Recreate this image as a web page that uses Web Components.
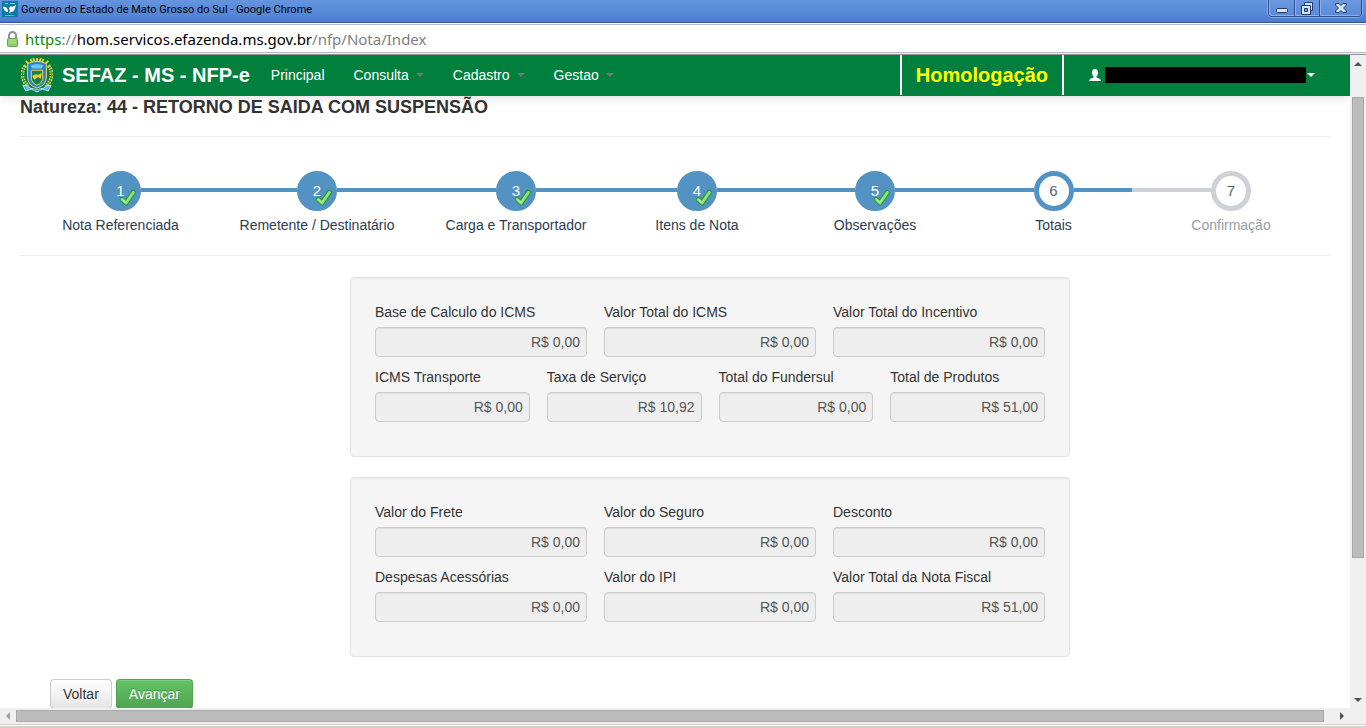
<!DOCTYPE html>
<html lang="pt-BR">
<head>
<meta charset="utf-8">
<title>Governo do Estado de Mato Grosso do Sul</title>
<style>
html, body { margin: 0; height: 100%; }
body { font: 14px/20px "Liberation Sans", Arial, sans-serif; color: #333; background: #fff; overflow: hidden; }
</style>
</head>
<body>
<browser-window>
  <title-bar slot="title">Governo do Estado de Mato Grosso do Sul - Google Chrome</title-bar>
  <address-bar slot="address"></address-bar>
  <site-header slot="page"></site-header>
  <nota-page slot="page">
    <span slot="heading">Natureza: 44 - RETORNO DE SAIDA COM SUSPENSÃO</span>
    <step-list slot="steps"></step-list>
    <field-panel slot="panels">
      <field-row>
        <money-field label="Base de Calculo do ICMS" value="R$ 0,00"></money-field>
        <money-field label="Valor Total do ICMS" value="R$ 0,00"></money-field>
        <money-field label="Valor Total do Incentivo" value="R$ 0,00"></money-field>
      </field-row>
      <field-row>
        <money-field label="ICMS Transporte" value="R$ 0,00"></money-field>
        <money-field label="Taxa de Serviço" value="R$ 10,92"></money-field>
        <money-field label="Total do Fundersul" value="R$ 0,00"></money-field>
        <money-field label="Total de Produtos" value="R$ 51,00"></money-field>
      </field-row>
    </field-panel>
    <field-panel slot="panels">
      <field-row>
        <money-field label="Valor do Frete" value="R$ 0,00"></money-field>
        <money-field label="Valor do Seguro" value="R$ 0,00"></money-field>
        <money-field label="Desconto" value="R$ 0,00"></money-field>
      </field-row>
      <field-row>
        <money-field label="Despesas Acessórias" value="R$ 0,00"></money-field>
        <money-field label="Valor do IPI" value="R$ 0,00"></money-field>
        <money-field label="Valor Total da Nota Fiscal" value="R$ 51,00"></money-field>
      </field-row>
    </field-panel>
    <action-button slot="actions">Voltar</action-button>
    <action-button slot="actions" variant="success">Avançar</action-button>
  </nota-page>
  <scroll-bar slot="vscroll" direction="vertical"></scroll-bar>
  <scroll-bar slot="hscroll" direction="horizontal"></scroll-bar>
</browser-window>

<script>
const component = (name, render, ready) => customElements.define(name, class extends HTMLElement {
  constructor() { super(); this.attachShadow({ mode: 'open' }); }
  connectedCallback() {
    this.shadowRoot.innerHTML = '<style>:host,*{box-sizing:border-box}</style>' + render(this);
    if (ready) ready(this);
  }
});

component('browser-window', () => `
<style>
:host { display: flex; flex-direction: column; height: 100vh; }
.view { flex: 1; min-height: 0; display: flex; }
.page { flex: 1; min-width: 0; overflow: hidden; }
.edge { height: 4px; background: #d4d0c8; box-shadow: inset 0 1px #d4d0c8, inset 0 2px #fff; }
</style>
<slot name="title"></slot>
<slot name="address"></slot>
<div class="view"><div class="page"><slot name="page"></slot></div><slot name="vscroll"></slot></div>
<slot name="hscroll"></slot>
<div class="edge"></div>`);

component('title-bar', () => `
<style>
:host { display: flex; height: 23px; background: linear-gradient(#6495de, #5585d6 70%, #4b79cf); border-bottom: 1px solid #2f5597; color: #000; font: 11px/20px Roboto, Tahoma, sans-serif; }
.icon { width: 16px; height: 16px; margin: 1px 3px 0 2px; }
.text { flex: 1; }
.controls { display: flex; height: 17px; margin-right: 4px; border: 1px solid #2d4f8e; border-top: 0; border-radius: 0 0 4px 4px; box-shadow: 0 0 0 1px #83a9e6; }
button { border: 0; border-left: 1px solid #2d4f8e; padding: 0; margin: 0; width: 25px; background: linear-gradient(#6b98e0, #5a89d8); box-shadow: inset 1px -1px #8bb0ea; display: flex; justify-content: center; }
button:first-child { border-left: 0; border-radius: 0 0 0 3px; }
button:last-child { width: 42px; border-radius: 0 0 3px 0; }
</style>
<svg class="icon" viewBox="0 0 16 16"><rect width="16" height="16" fill="#087ca9"/><path d="M3 2.500h3M8 2.500h5" stroke="#75c6df"/><path d="M1 6c3-1 5 1 5 5C3 11 2 9 1 6zM7 8c0-2 2-4 3-2l4-2-2 6-5 2 1-3z" fill="#fff"/><path d="M3 14.500h9" stroke="#57b5d4"/></svg>
<span class="text"><slot></slot></span>
<div class="controls">
<button aria-label="Minimizar"><svg width="14" height="16"><rect x="1.500" y="8.500" width="11" height="4" rx="1" fill="#d7e4fa" stroke="#1f3c72"/></svg></button>
<button aria-label="Restaurar"><svg width="14" height="16" fill="#d7e4fa" stroke="#1f3c72"><path d="M4.500 2.500h8v8h-8z"/><path d="M1.500 5.500h9v9h-9z"/><path d="M4.500 8.500h3v3h-3z" fill="#6f99dc"/></svg></button>
<button aria-label="Fechar"><svg width="14" height="16"><path d="M1.500 3.500h3.500l2 2 2-2h3.500v1.500l-3 3 3 3v1.500H9l-2-2-2 2H1.500V11l3-3-3-3z" fill="#d7e4fa" stroke="#1f3c72"/></svg></button>
</div>`);

component('address-bar', () => `
<style>
:host { display: flex; align-items: center; height: 32px; background: #fff; border-bottom: 1px solid #929292; box-shadow: inset 0 1px #fff, inset 0 2px #b9b9c1, inset 0 -1px #f0f0f4, inset 0 -2px #b4b8ca; font: 15px/24px "Noto Sans", Tahoma, sans-serif; color: #808080; white-space: pre; }
svg { margin: 0 6px 0 6px; }
.secure { color: #0a8a0a; } .domain { color: #000; }
</style>
<svg width="13" height="16" viewBox="0 0 13 16"><path d="M3 8V4.500a3.500 3.500 0 0 1 7 0V8" fill="none" stroke="#8f8f8f" stroke-width="2"/><rect x="1.500" y="7.500" width="10" height="8" rx="1" fill="#8fce6c" stroke="#6b9d55"/><path d="M2.500 9h8M3 11.500h7" stroke="#b5e49a"/></svg><div class="url"><span class="secure">https</span>://<span class="domain">hom.servicos.efazenda.ms.gov.br</span>/nfp/Nota/Index</div>`);

component('site-header', () => `
<style>
:host { display: flex; height: 41px; background: #007f3d; color: #fff; box-shadow: 0 1px 10px rgba(0,0,0,.15); position: relative; line-height: 20px; }
a { color: inherit; text-decoration: none; display: flex; align-items: center; height: 40px; }
.brand { font-size: 20px; font-weight: bold; padding-left: 21px; margin-right: 6px; }
.brand svg { margin-right: 9px; }
nav { display: flex; flex: 1; }
nav a { padding: 0 14px 0 15px; }
i { border: 4px solid transparent; border-top-color: #777; border-bottom: 0; margin-left: 7px; }
.env { display: flex; align-items: center; height: 40px; padding: 0 14px; border: solid #fff; border-width: 0 2px; color: #ff0; font-size: 20px; font-weight: bold; }
.user { padding: 0 35px 0 25px; }
.mask { width: 201px; height: 16px; background: #000; margin-left: 4px; }
.user i { border-top-color: #fff; margin-left: 1px; }
</style>
<a class="brand" href="#"><svg width="32" height="36" viewBox="0 0 34 38">
<g stroke="#f3d22c" stroke-width="2"><path d="M17 8V1M13 8l-3-6M21 8l3-6M10 9L5 4M24 9l5-5M15 7l-2-6M19 7l2-6"/></g>
<path d="M5 9c-6 7-4 17 3 22M29 9c6 7 4 17-3 22" fill="none" stroke="#d8cf4a" stroke-width="4" stroke-dasharray="2 1"/>
<path d="M3 12c-3 7-1 13 3 17M31 12c3 7 1 13-3 17" fill="none" stroke="#4e8b36"/>
<path d="M7 7q10-5 20 0v14q0 9-10 12Q7 30 7 21z" fill="#2b83d2" stroke="#f1dc65"/>
<path d="M10 9q7-3 14 0l-2 3H12z" fill="#6fc5ec"/>
<path d="M11 14h12v10q-2 5-6 6-4-1-6-6z" fill="#168447" stroke="#efd84e"/>
<path d="M12 20q4-3 6-1l4-2-1 6-3-2-4 3z" fill="#f2cc35"/>
<path d="M2 30q5-1 8 3 7 3 14 0 3-4 8-3l-3 6-6-2-6 3-6-3-6 2z" fill="#58b5e7" stroke="#c8ebf7"/>
<path d="M13 35h8" stroke="#287cb9"/></svg>SEFAZ - MS - NFP-e</a>
<nav><a href="#">Principal</a><a href="#">Consulta<i></i></a><a href="#">Cadastro<i></i></a><a href="#">Gestao<i></i></a></nav>
<div class="env">Homologação</div>
<a class="user" href="#" aria-label="Usuário"><svg width="12" height="12" viewBox="0 0 12 12"><path d="M3 3.500C3 1 4 0 6 0s3 1 3 3.500c0 2-.7 3-1.500 4v1l3.500 1.500 1 2H0l1-2 3.500-1.500v-1C3.700 6.500 3 5.500 3 3.500z" fill="#fff"/></svg><span class="mask"></span><i></i></a>`);

component('nota-page', () => `
<style>
:host { display: block; padding: 0 20px; }
h1 { margin: 0; padding-top: 1px; font-size: 18px; line-height: 20px; }
hr { border: 0; border-top: 1px solid #eee; margin: 19px 0 0; }
.steps { padding: 34px 0 1px; }
.form { margin: 21px -40px 0 30px; }
.panels { display: flex; flex-direction: column; align-items: center; gap: 20px; }
.actions { display: flex; gap: 4px; margin-top: 22px; }
</style>
<h1><slot name="heading"></slot></h1><hr>
<div class="steps"><slot name="steps"></slot></div><hr>
<form class="form" onsubmit="return false"><div class="panels"><slot name="panels"></slot></div><div class="actions"><slot name="actions"></slot></div></form>`);

const steps = [['Nota Referenciada', 'complete'], ['Remetente / Destinatário', 'complete'], ['Carga e Transportador', 'complete'], ['Itens de Nota', 'complete'], ['Observações', 'complete'], ['Totais', 'active'], ['Confirmação', '']];
component('step-list', () => `
<style>
:host { display: block; }
.steps { display: grid; grid-template-columns: 201fr 192fr 206fr 156fr 200fr 157fr 198fr; }
</style>
<div class="steps" role="list">${steps.map(([t, s], i) => `<wizard-step role="listitem" number="${i + 1}" state="${s}">${t}</wizard-step>`).join('')}</div>`);

component('wizard-step', el => `
<style>
:host { --c: #ced1d6; display: block; color: #949ea7; text-align: center; }
:host([state="active"]), :host([state="complete"]) { --c: #5293c4; color: #2b3d53; }
a { color: inherit; text-decoration: none; display: block; }
.track { display: flex; align-items: center; }
.track::before, .track::after { content: ""; flex: 1; height: 4px; margin-bottom: 2px; background: var(--c); }
:host([number="1"]) .track::before, :host([number="7"]) .track::after { background: none; }
.dot { position: relative; width: 40px; height: 40px; border: 5px solid var(--c); border-radius: 50%; background: #fff; color: #546474; font-size: 15px; line-height: 30px; }
:host([state="complete"]) .dot { background: var(--c); color: #fff; }
svg { position: absolute; left: 13px; top: 13px; }
.label { display: block; margin-top: 4px; white-space: nowrap; }
</style>
<a href="#"><span class="track"><span class="dot">${el.getAttribute('number')}${el.getAttribute('state') === 'complete' ? '<svg width="17" height="17" viewBox="0 0 17 17" fill="none" stroke-linejoin="round" stroke-linecap="round"><path d="M3.300 10.500L7 14 14.300 3.500" stroke="#259a35" stroke-width="5"/><path d="M3.300 10.500L7 14 14.300 3.500" stroke="#8fe07f" stroke-width="3"/><path d="M3.500 10.500L7 13.500l2-3" stroke="#b8f2a8"/></svg>' : ''}</span></span>
<span class="label"><slot></slot></span></a>`);

component('field-panel', () => `
<style>
:host { display: flex; flex-direction: column; gap: 10px; width: 100%; max-width: 720px; padding: 24px 24px 34px; background: #f5f5f5; border: 1px solid #e3e3e3; border-radius: 4px; box-shadow: inset 0 1px 1px rgba(0,0,0,.05); }
</style><slot></slot>`);

component('field-row', () => `
<style>:host { display: flex; gap: 17px; }</style><slot></slot>`);

component('money-field', el => `
<style>
:host { display: block; flex: 1; min-width: 0; }
label { display: block; margin-bottom: 5px; color: #333; }
input { display: block; width: 100%; height: 30px; margin: 0; padding: 4px 6px; border: 1px solid #ccc; border-radius: 4px; background: #eee; color: #555; font: inherit; text-align: right; box-shadow: inset 0 1px 1px rgba(0,0,0,.075); }
</style>
<label for="f">${el.getAttribute('label')}</label><input id="f" type="text" readonly value="${el.getAttribute('value')}">`);

component('action-button', () => `
<style>
:host { display: block; }
button { height: 30px; padding: 0 12px; margin: 0; font: inherit; color: #333; border: 1px solid #ccc; border-bottom-color: #b3b3b3; border-radius: 4px; background: linear-gradient(#fff, #e6e6e6); text-shadow: 0 1px 1px rgba(255,255,255,.75); box-shadow: inset 0 1px rgba(255,255,255,.2); }
:host([variant="success"]) button { color: #fff; background: linear-gradient(#62c462, #51a351); border-color: #51a351 #51a351 #387038; text-shadow: 0 -1px rgba(0,0,0,.25); }
</style><button type="button"><slot></slot></button>`);

component('scroll-bar', el => {
  const v = el.getAttribute('direction') === 'vertical';
  const arrow = (d, c) => `<svg width="16" height="16" viewBox="0 0 16 16"><path d="${d}" fill="${c}"/></svg>`;
  return `<style>
:host { display: flex; flex: none; background: #f0f0f0; ${v ? 'flex-direction: column; width: 16px;' : 'height: 16px; padding-right: 16px;'} }
svg { display: block; flex: none; }
.before { flex: ${v ? 26 : 0}; } .after { flex: ${v ? 134 : 10}; }
.thumb { flex: ${v ? 461 : 1308}; background: #bcbcbc; border: 1px solid #a8a8a8; margin: ${v ? '0 2px' : '2px 0'}; }
</style>${v ? arrow('M4 11l4-4 4 4z', '#505050') : arrow('M10 4L6 8l4 4z', '#a0a0a0')}
<div class="before"></div><div class="thumb"></div><div class="after"></div>
${v ? arrow('M4 6l4 4 4-4z', '#505050') : arrow('M6 4l4 4-4 4z', '#505050')}`;
});
</script>
</body>
</html>
